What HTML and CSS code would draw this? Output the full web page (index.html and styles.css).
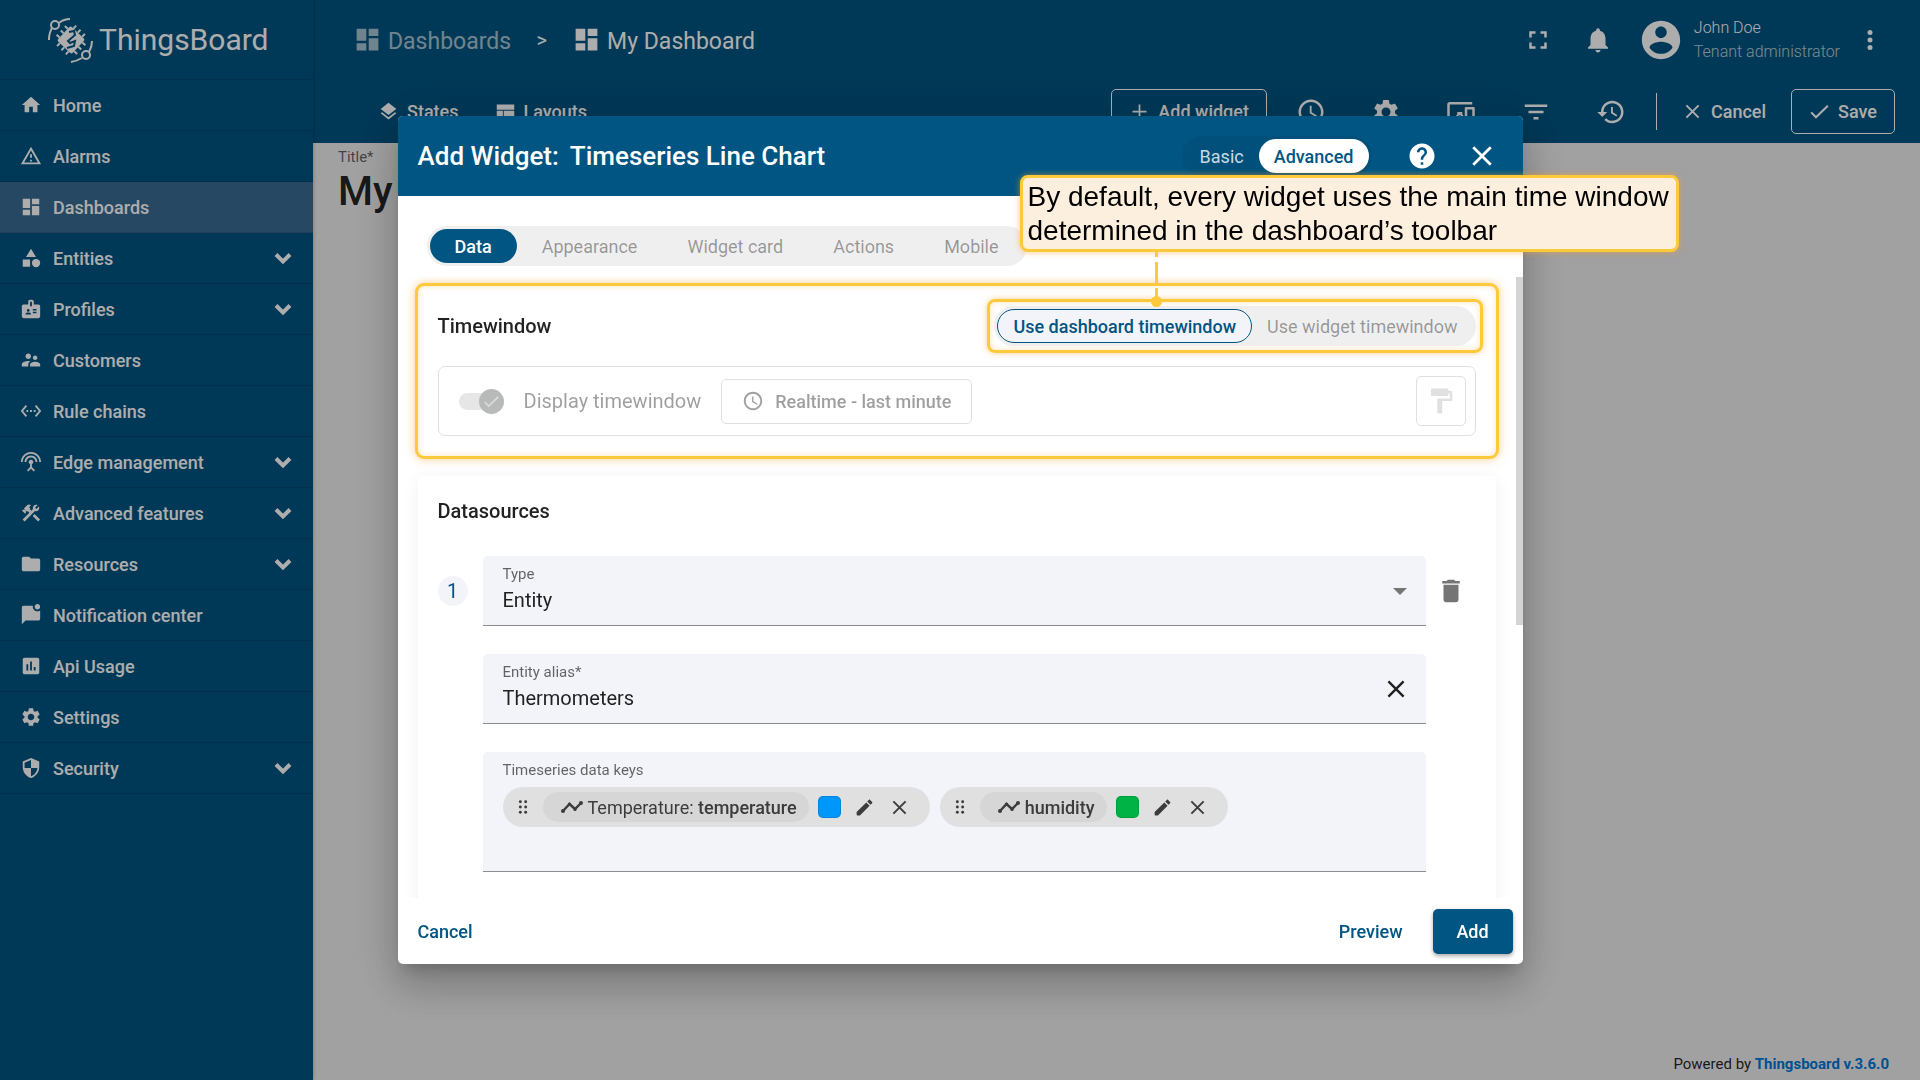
FILE: index.html
```html
<!DOCTYPE html>
<html lang="en">
<head>
    <meta charset="UTF-8">
    <meta name="viewport" content="width=device-width, initial-scale=1.0">
    <title>ThingsBoard | My Dashboard</title>
    <link rel="stylesheet" href="styles.css">
</head>

<body>
    <!-- icon sprite -->
    <svg class="sprite" aria-hidden="true">
        <symbol id="i-dashboard" viewBox="0 0 24 24"><path d="M3 13h8V3H3v10zm0 8h8v-6H3v6zm10 0h8V11h-8v10zm0-18v6h8V3h-8z"/></symbol>
        <symbol id="i-home" viewBox="0 0 24 24"><path d="M10 20v-6h4v6h5v-8h3L12 3 2 12h3v8z"/></symbol>
        <symbol id="i-alarm" viewBox="0 0 24 24"><path fill-rule="evenodd" d="M12 2L1 21h22L12 2zm0 4l7.53 13H4.47L12 6zm-1 4v4h2v-4h-2zm0 6v2h2v-2h-2z"/></symbol>
        <symbol id="i-category" viewBox="0 0 24 24"><path d="M12 2l-5.500 9h11zM3 13.500h8v8H3z"/><circle cx="17.500" cy="17.500" r="4.500"/></symbol>
        <symbol id="i-badge" viewBox="0 0 24 24"><path fill-rule="evenodd" d="M20 7h-5V4c0-1.100-.9-2-2-2h-2c-1.100 0-2 .9-2 2v3H4c-1.100 0-2 .9-2 2v11c0 1.100.9 2 2 2h16c1.100 0 2-.9 2-2V9c0-1.100-.9-2-2-2zM9 12c.83 0 1.500.67 1.500 1.500S9.830 15 9 15s-1.500-.67-1.500-1.500S8.170 12 9 12zm3 6H6v-.75c0-1 2-1.500 3-1.500s3 .5 3 1.500V18zm1-9h-2V4h2v5zm5 7.500h-4V15h4v1.500zm0-3h-4V12h4v1.500z"/></symbol>
        <symbol id="i-people" viewBox="0 0 24 24"><path d="M16.5 12c1.38 0 2.49-1.12 2.49-2.5S17.88 7 16.5 7C15.12 7 14 8.12 14 9.5s1.12 2.5 2.5 2.5zM9 11c1.66 0 2.99-1.34 2.99-3S10.66 5 9 5C7.34 5 6 6.34 6 8s1.34 3 3 3zm7.5 3c-1.83 0-5.5.92-5.5 2.75V19h11v-2.25c0-1.83-3.67-2.75-5.5-2.75zM9 13c-2.33 0-7 1.17-7 3.5V19h7v-2.25c0-.85.33-2.34 2.37-3.47C10.5 13.1 9.66 13 9 13z"/></symbol>
        <symbol id="i-rules" viewBox="0 0 24 24"><path d="M7.77 6.76L6.23 5.48.82 12l5.41 6.52 1.54-1.28L3.42 12l4.35-5.24zM7 13h2v-2H7v2zm10-2h-2v2h2v-2zm-6 2h2v-2h-2v2zm6.77-7.52l-1.54 1.28L20.58 12l-4.35 5.24 1.54 1.28L23.18 12l-5.41-6.52z"/></symbol>
        <symbol id="i-edge" viewBox="0 0 24 24"><path d="M12 5c-3.87 0-7 3.13-7 7h2c0-2.76 2.24-5 5-5s5 2.24 5 5h2c0-3.87-3.13-7-7-7zm1 9.29c.88-.39 1.5-1.26 1.5-2.29 0-1.38-1.12-2.5-2.5-2.5S9.5 10.62 9.5 12c0 1.02.62 1.9 1.5 2.29v3.3L7.59 21 9 22.41l3-3 3 3L16.41 21 13 17.59v-3.3zM12 1C5.93 1 1 5.93 1 12h2c0-4.97 4.03-9 9-9s9 4.03 9 9h2c0-6.07-4.93-11-11-11z"/></symbol>
        <symbol id="i-tools" viewBox="0 0 24 24"><path d="M13.78 15.3l6 6 2.11-2.16-6-6-2.11 2.16zM17.5 10c1.93 0 3.5-1.57 3.5-3.5 0-.58-.16-1.12-.41-1.6l-2.7 2.7-1.49-1.49 2.7-2.7c-.48-.25-1.02-.41-1.6-.41C15.57 3 14 4.57 14 6.5c0 .41.08.8.21 1.16l-1.85 1.85-1.78-1.78.71-.71-1.41-1.41L12 3.49c-1.17-1.17-3.07-1.17-4.24 0L4.22 7.03l1.41 1.41H2.81l-.71.71 3.54 3.54.71-.71V9.15l1.41 1.41.71-.71 1.78 1.78-7.41 7.41 2.12 2.12L16.34 9.79c.36.13.75.21 1.16.21z"/></symbol>
        <symbol id="i-folder" viewBox="0 0 24 24"><path d="M10 4H4c-1.1 0-1.99.9-1.99 2L2 18c0 1.1.9 2 2 2h16c1.1 0 2-.9 2-2V8c0-1.1-.9-2-2-2h-8l-2-2z"/></symbol>
        <symbol id="i-chat" viewBox="0 0 24 24"><path d="M22 6.98V16c0 1.1-.9 2-2 2H6l-4 4V4c0-1.1.9-2 2-2h10.1c-.06.32-.1.66-.1 1 0 2.76 2.24 5 5 5 1.13 0 2.16-.39 3-1.02zM16 3c0 1.66 1.34 3 3 3s3-1.34 3-3-1.34-3-3-3-3 1.34-3 3z"/></symbol>
        <symbol id="i-chart" viewBox="0 0 24 24"><path fill-rule="evenodd" d="M19 3H5c-1.1 0-2 .9-2 2v14c0 1.1.9 2 2 2h14c1.1 0 2-.9 2-2V5c0-1.1-.9-2-2-2zM9 17H7v-7h2v7zm4 0h-2V7h2v10zm4 0h-2v-4h2v4z"/></symbol>
        <symbol id="i-gear" viewBox="0 0 24 24"><path d="M19.14 12.94c.04-.3.06-.61.06-.94 0-.32-.02-.64-.07-.94l2.03-1.58c.18-.14.23-.41.12-.61l-1.92-3.32c-.12-.22-.37-.29-.59-.22l-2.39.96c-.5-.38-1.03-.7-1.62-.94l-.36-2.54c-.04-.24-.24-.41-.48-.41h-3.84c-.24 0-.43.17-.47.41l-.36 2.54c-.59.24-1.13.57-1.62.94l-2.39-.96c-.22-.08-.47 0-.59.22L2.74 8.87c-.12.21-.08.47.12.61l2.03 1.58c-.05.3-.09.63-.09.94s.02.64.07.94l-2.03 1.58c-.18.14-.23.41-.12.61l1.92 3.32c.12.22.37.29.59.22l2.39-.96c.5.38 1.03.7 1.62.94l.36 2.54c.05.24.24.41.48.41h3.84c.24 0 .44-.17.47-.41l.36-2.54c.59-.24 1.13-.56 1.62-.94l2.39.96c.22.08.47 0 .59-.22l1.92-3.32c.12-.22.07-.47-.12-.61l-2.01-1.58zM12 15.6c-1.98 0-3.6-1.62-3.6-3.6s1.62-3.6 3.6-3.6 3.6 1.62 3.6 3.6-1.62 3.6-3.6 3.6z"/></symbol>
        <symbol id="i-shield" viewBox="0 0 24 24"><path d="M12 1L3 5v6c0 5.55 3.84 10.74 9 12 5.16-1.26 9-6.45 9-12V5l-9-4zm0 10.99h7c-.53 4.12-3.28 7.79-7 8.94V12H5V6.3l7-3.11v8.8z"/></symbol>
        <symbol id="i-chevron" viewBox="0 0 24 24"><path d="M5 8.500l7 7 7-7" fill="none" stroke="currentColor" stroke-width="4"/></symbol>
        <symbol id="i-layers" viewBox="0 0 24 24"><path d="M11.99 18.54l-7.37-5.73L3 14.07l9 7 9-7-1.63-1.27-7.38 5.74zM12 16l7.36-5.73L21 9l-9-7-9 7 1.63 1.27L12 16z"/></symbol>
        <symbol id="i-layout" viewBox="0 0 24 24"><path d="M2 4h20v6H2zM2 11h7v9H2zM10 11h12v9H10z"/></symbol>
        <symbol id="i-clock" viewBox="0 0 24 24"><path d="M11.99 2C6.47 2 2 6.48 2 12s4.47 10 9.99 10C17.52 22 22 17.52 22 12S17.52 2 11.99 2zM12 20c-4.42 0-8-3.58-8-8s3.58-8 8-8 8 3.58 8 8-3.58 8-8 8zm.5-13H11v6l5.25 3.15.75-1.23-4.500-2.670z"/></symbol>
        <symbol id="i-devices" viewBox="0 0 24 24"><path fill-rule="evenodd" d="M3 6h18V4H3c-1.1 0-2 .9-2 2v12c0 1.1.9 2 2 2h4v-2H3V6zm10 6H9v1.78c-.61.55-1 1.33-1 2.22s.39 1.67 1 2.22V20h4v-1.78c.61-.55 1-1.34 1-2.22s-.39-1.67-1-2.22V12zm-2 5.500c-.83 0-1.500-.67-1.500-1.500s.67-1.500 1.500-1.500 1.500.67 1.500 1.500-.67 1.500-1.500 1.500zM22 8h-6c-.5 0-1 .5-1 1v10c0 .5.5 1 1 1h6c.5 0 1-.5 1-1V9c0-.5-.5-1-1-1zm-1 10h-4v-8h4v8z"/></symbol>
        <symbol id="i-filter" viewBox="0 0 24 24"><path d="M10 18h4v-2h-4v2zM3 6v2h18V6H3zm3 7h12v-2H6v2z"/></symbol>
        <symbol id="i-history" viewBox="0 0 24 24"><path d="M13 3c-4.97 0-9 4.03-9 9H1l3.89 3.89.07.14L9 12H6c0-3.87 3.13-7 7-7s7 3.13 7 7-3.13 7-7 7c-1.93 0-3.68-.79-4.94-2.06l-1.42 1.42C8.27 19.99 10.51 21 13 21c4.97 0 9-4.03 9-9s-4.03-9-9-9zm-1 5v5l4.28 2.54.72-1.21-3.5-2.08V8H12z"/></symbol>
        <symbol id="i-fullscreen" viewBox="0 0 24 24"><path d="M7 14H5v5h5v-2H7v-3zm-2-4h2V7h3V5H5v5zm12 7h-3v2h5v-5h-2v3zM14 5v2h3v3h2V5h-5z"/></symbol>
        <symbol id="i-bell" viewBox="0 0 24 24"><path d="M12 22c1.1 0 2-.9 2-2h-4c0 1.1.89 2 2 2zm6-6v-5c0-3.07-1.64-5.64-4.5-6.32V4c0-.83-.67-1.5-1.5-1.5s-1.5.67-1.5 1.5v.68C7.63 5.36 6 7.92 6 11v5l-2 2v1h16v-1l-2-2z"/></symbol>
        <symbol id="i-account" viewBox="0 0 24 24"><path d="M12 2C6.48 2 2 6.48 2 12s4.48 10 10 10 10-4.48 10-10S17.52 2 12 2zm0 3c1.66 0 3 1.34 3 3s-1.34 3-3 3-3-1.34-3-3 1.34-3 3-3zm0 14.2c-2.5 0-4.71-1.28-6-3.22.03-1.99 4-3.08 6-3.08 1.99 0 5.97 1.09 6 3.08-1.29 1.94-3.5 3.22-6 3.22z"/></symbol>
        <symbol id="i-more" viewBox="0 0 24 24"><circle cx="12" cy="6" r="2"/><circle cx="12" cy="12" r="2"/><circle cx="12" cy="18" r="2"/></symbol>
        <symbol id="i-plus" viewBox="0 0 24 24"><path d="M12 4v16M4 12h16" fill="none" stroke="currentColor" stroke-width="2"/></symbol>
        <symbol id="i-close" viewBox="0 0 24 24"><path d="M5 5l14 14M19 5L5 19" fill="none" stroke="currentColor" stroke-width="2.200"/></symbol>
        <symbol id="i-check" viewBox="0 0 24 24"><path d="M2.500 13l5.500 5.500L21.500 5.500" fill="none" stroke="currentColor" stroke-width="2.400"/></symbol>
        <symbol id="i-help" viewBox="0 0 24 24"><path d="M12 2C6.48 2 2 6.48 2 12s4.48 10 10 10 10-4.48 10-10S17.52 2 12 2zm1 17h-2v-2h2v2zm2.07-7.75l-.9.92C13.45 12.9 13 13.5 13 15h-2v-.5c0-1.1.45-2.1 1.17-2.83l1.24-1.26c.37-.36.59-.86.59-1.41 0-1.1-.9-2-2-2s-2 .9-2 2H8c0-2.21 1.79-4 4-4s4 1.79 4 4c0 .88-.36 1.68-.93 2.25z"/></symbol>
        <symbol id="i-paint" viewBox="0 0 24 24"><path d="M18 4V3c0-.55-.45-1-1-1H5c-.55 0-1 .45-1 1v4c0 .55.45 1 1 1h12c.55 0 1-.45 1-1V6h1v4H9v11c0 .55.45 1 1 1h2c.55 0 1-.45 1-1v-9h8V4h-3z"/></symbol>
        <symbol id="i-delete" viewBox="0 0 24 24"><path d="M6 19c0 1.1.9 2 2 2h8c1.1 0 2-.9 2-2V7H6v12zM19 4h-3.500l-1-1h-5l-1 1H5v2h14V4z"/></symbol>
        <symbol id="i-edit" viewBox="0 0 24 24"><path d="M3 17.25V20c0 .6.400 1 1 1h2.750L17.81 9.94l-3.750-3.750L3 17.250zM20.710 7.040c.39-.39.39-1.020 0-1.410l-2.340-2.340c-.39-.39-1.020-.39-1.410 0l-1.830 1.830 3.750 3.750 1.830-1.830z"/></symbol>
        <symbol id="i-timeline" viewBox="0 0 24 24"><path d="M3 16L9.500 9l5.500 5L21 8" fill="none" stroke="currentColor" stroke-width="2.400"/><circle cx="3" cy="16" r="2"/><circle cx="9.500" cy="9" r="1.600"/><circle cx="15" cy="14.500" r="1.600"/><circle cx="21" cy="8" r="2"/></symbol>
        <symbol id="i-drag" viewBox="0 0 24 24"><circle cx="8" cy="4" r="2.200"/><circle cx="8" cy="12" r="2.200"/><circle cx="8" cy="20" r="2.200"/><circle cx="16" cy="4" r="2.200"/><circle cx="16" cy="12" r="2.200"/><circle cx="16" cy="20" r="2.200"/></symbol>
    </svg>

    <div class="app">
        <nav class="sidebar">
            <a class="logo" href="#">
                <svg viewBox="0 0 46 46" aria-hidden="true">
                    <g fill="none" stroke="currentColor" stroke-width="2">
                        <circle cx="7" cy="8" r="4"/>
                        <circle cx="38" cy="38" r="4"/>
                        <path d="M11 6q5-4 11-4M4 11q-3 5-3 12M44 24q0 6-3 11M34 41q-5 3-11 4"/>
                    </g>
                    <g transform="rotate(43 23 23)">
                        <rect x="13" y="13" width="20" height="20" rx="2" fill="currentColor"/>
                        <path d="M17 13V9M23 13V9M29 13V9M17 33v4M23 33v4M29 33v4M13 17H9M13 23H9M13 29H9M33 17h4M33 23h4M33 29h4" stroke="currentColor" stroke-width="2"/>
                    </g>
                    <path d="M21 15l5-1 1 4-7 6 2 2 5-2-1 5-7 2" fill="none" stroke="#005580" stroke-width="2"/>
                </svg>
                <span>ThingsBoard</span>
            </a>
            <ul class="menu">
                <li><a href="#"><svg class="icon"><use href="#i-home"/></svg>Home</a></li>
                <li><a href="#"><svg class="icon"><use href="#i-alarm"/></svg>Alarms</a></li>
                <li><a href="#" class="active"><svg class="icon"><use href="#i-dashboard"/></svg>Dashboards</a></li>
                <li><a href="#"><svg class="icon"><use href="#i-category"/></svg>Entities<svg class="chevron"><use href="#i-chevron"/></svg></a></li>
                <li><a href="#"><svg class="icon"><use href="#i-badge"/></svg>Profiles<svg class="chevron"><use href="#i-chevron"/></svg></a></li>
                <li><a href="#"><svg class="icon"><use href="#i-people"/></svg>Customers</a></li>
                <li><a href="#"><svg class="icon"><use href="#i-rules"/></svg>Rule chains</a></li>
                <li><a href="#"><svg class="icon"><use href="#i-edge"/></svg>Edge management<svg class="chevron"><use href="#i-chevron"/></svg></a></li>
                <li><a href="#"><svg class="icon"><use href="#i-tools"/></svg>Advanced features<svg class="chevron"><use href="#i-chevron"/></svg></a></li>
                <li><a href="#"><svg class="icon"><use href="#i-folder"/></svg>Resources<svg class="chevron"><use href="#i-chevron"/></svg></a></li>
                <li><a href="#"><svg class="icon"><use href="#i-chat"/></svg>Notification center</a></li>
                <li><a href="#"><svg class="icon"><use href="#i-chart"/></svg>Api Usage</a></li>
                <li><a href="#"><svg class="icon"><use href="#i-gear"/></svg>Settings</a></li>
                <li><a href="#"><svg class="icon"><use href="#i-shield"/></svg>Security<svg class="chevron"><use href="#i-chevron"/></svg></a></li>
            </ul>
        </nav>

        <div class="main">
            <header class="topbar">
                <div class="topbar-row">
                    <div class="breadcrumb">
                        <a href="#" class="crumb faded"><svg><use href="#i-dashboard"/></svg>Dashboards</a>
                        <span class="sep">&gt;</span>
                        <a href="#" class="crumb"><svg><use href="#i-dashboard"/></svg>My Dashboard</a>
                    </div>
                    <div class="user-area">
                        <button class="round-btn" aria-label="Fullscreen"><svg><use href="#i-fullscreen"/></svg></button>
                        <button class="round-btn" aria-label="Notifications"><svg><use href="#i-bell"/></svg></button>
                        <svg class="avatar"><use href="#i-account"/></svg>
                        <div class="user">
                            <span>John Doe</span>
                            <span class="role">Tenant administrator</span>
                        </div>
                        <button class="round-btn" aria-label="More"><svg><use href="#i-more"/></svg></button>
                    </div>
                </div>
                <div class="toolbar">
                    <div class="toolbar-left">
                        <button class="text-btn"><svg><use href="#i-layers"/></svg>States</button>
                        <button class="text-btn"><svg><use href="#i-layout"/></svg>Layouts</button>
                    </div>
                    <div class="toolbar-right">
                        <button class="text-btn outlined"><svg><use href="#i-plus"/></svg>Add widget</button>
                        <div class="tools">
                            <button class="tool-btn" aria-label="Timewindow"><svg><use href="#i-clock"/></svg></button>
                            <button class="tool-btn" aria-label="Settings"><svg><use href="#i-gear"/></svg></button>
                            <button class="tool-btn" aria-label="Entity aliases"><svg><use href="#i-devices"/></svg></button>
                            <button class="tool-btn" aria-label="Filters"><svg><use href="#i-filter"/></svg></button>
                            <button class="tool-btn" aria-label="Version control"><svg><use href="#i-history"/></svg></button>
                        </div>
                        <span class="divider"></span>
                        <button class="text-btn cancel"><svg><use href="#i-close"/></svg>Cancel</button>
                        <button class="text-btn outlined"><svg><use href="#i-check"/></svg>Save</button>
                    </div>
                </div>
            </header>

            <main class="canvas">
                <div class="title-field">
                    <label for="dashTitle">Title*</label>
                    <input type="text" id="dashTitle" value="My Dashboard">
                </div>
                <p class="powered">Powered by <a href="#">Thingsboard v.3.6.0</a></p>
            </main>
        </div>
    </div>

    <div class="backdrop">
        <div class="dialog" role="dialog" aria-labelledby="dialogTitle">
            <div class="dialog-header">
                <h2 id="dialogTitle"><span>Add Widget:</span><span>Timeseries Line Chart</span></h2>
                <div class="segment on-primary">
                    <button>Basic</button>
                    <button class="selected">Advanced</button>
                </div>
                <div class="header-actions">
                    <button aria-label="Help"><svg><use href="#i-help"/></svg></button>
                    <button aria-label="Close"><svg><use href="#i-close"/></svg></button>
                </div>
            </div>

            <div class="tabs-row">
                <div class="segment tabs">
                    <button class="selected">Data</button>
                    <button>Appearance</button>
                    <button>Widget card</button>
                    <button>Actions</button>
                    <button>Mobile</button>
                </div>
            </div>

            <div class="dialog-body">
                <div class="dialog-content">
                    <section class="panel highlighted">
                        <div class="panel-head">
                            <h3>Timewindow</h3>
                            <div class="segment outlined-segment">
                                <button class="selected">Use dashboard timewindow</button>
                                <button>Use widget timewindow</button>
                            </div>
                        </div>
                        <div class="timewindow">
                            <span class="toggle">
                                <input type="checkbox" id="displayTw" checked disabled>
                                <svg><use href="#i-check"/></svg>
                            </span>
                            <label for="displayTw">Display timewindow</label>
                            <button class="tw-btn" disabled><svg><use href="#i-clock"/></svg>Realtime - last minute</button>
                            <button class="paint-btn" aria-label="Timewindow style" disabled><svg><use href="#i-paint"/></svg></button>
                        </div>
                    </section>

                    <section class="panel">
                        <h3>Datasources</h3>
                        <div class="datasource">
                            <span class="number">1</span>
                            <div class="fields">
                                <div class="field">
                                    <label for="dsType">Type</label>
                                    <select id="dsType">
                                        <option>Entity</option>
                                    </select>
                                    <svg class="arrow" viewBox="0 0 14 7"><path d="M0 0h14L7 7z"/></svg>
                                </div>
                                <div class="field">
                                    <label for="dsAlias">Entity alias*</label>
                                    <input type="text" id="dsAlias" value="Thermometers">
                                    <button class="clear" aria-label="Clear"><svg><use href="#i-close"/></svg></button>
                                </div>
                                <div class="field keys">
                                    <label for="dsKeys">Timeseries data keys</label>
                                    <div class="chips">
                                        <div class="chip">
                                            <svg class="drag"><use href="#i-drag"/></svg>
                                            <span class="key"><svg><use href="#i-timeline"/></svg><span>Temperature: <b>temperature</b></span></span>
                                            <button class="swatch blue" aria-label="Color"></button>
                                            <button class="chip-btn" aria-label="Edit"><svg><use href="#i-edit"/></svg></button>
                                            <button class="chip-btn" aria-label="Remove"><svg><use href="#i-close"/></svg></button>
                                        </div>
                                        <div class="chip">
                                            <svg class="drag"><use href="#i-drag"/></svg>
                                            <span class="key"><svg><use href="#i-timeline"/></svg><b>humidity</b></span>
                                            <button class="swatch green" aria-label="Color"></button>
                                            <button class="chip-btn" aria-label="Edit"><svg><use href="#i-edit"/></svg></button>
                                            <button class="chip-btn" aria-label="Remove"><svg><use href="#i-close"/></svg></button>
                                        </div>
                                    </div>
                                    <input type="text" id="dsKeys">
                                </div>
                            </div>
                            <button class="delete" aria-label="Remove datasource"><svg><use href="#i-delete"/></svg></button>
                        </div>
                    </section>
                </div>
                <div class="scrollbar"><div class="thumb"></div></div>
            </div>

            <div class="dialog-footer">
                <button class="link-btn">Cancel</button>
                <button class="link-btn preview">Preview</button>
                <button class="add-btn">Add</button>
            </div>

            <!-- hint pointing at the timewindow switch -->
            <div class="callout">By default, every widget uses the main time window<br>determined in the dashboard’s toolbar</div>
        </div>
    </div>
</body>
</html>
```

FILE: styles.css
```css
* {
    box-sizing: border-box;
}

body {
    margin: 0;
    font-family: Roboto, sans-serif;
    font-size: 18px;
    color: rgba(0, 0, 0, 0.87);
}

button,
input,
select {
    font: inherit;
    color: inherit;
    background: none;
    border: none;
    padding: 0;
    margin: 0;
}

button {
    display: inline-flex;
    align-items: center;
    justify-content: center;
    cursor: pointer;
}

a {
    color: inherit;
    text-decoration: none;
}

svg {
    fill: currentColor;
    flex: none;
}

.sprite {
    position: absolute;
    width: 0;
    height: 0;
}

.app {
    display: flex;
    min-height: 100vh;
    background-color: #eee;
}

/* sidebar */

.sidebar {
    flex: none;
    width: 313px;
    background-color: #005380;
    color: white;
    z-index: 1;
    box-shadow: 0 0 4px rgba(0, 0, 0, 0.3);
}

.logo {
    display: flex;
    align-items: center;
    gap: 5px;
    height: 79px;
    padding-left: 48px;
    font-size: 30px;
}

.logo svg {
    width: 46px;
    height: 46px;
}

.menu {
    list-style: none;
    margin: 0;
    padding: 0;
    border-top: 1px solid rgba(0, 0, 0, 0.12);
}

.menu a {
    display: flex;
    align-items: center;
    gap: 11px;
    height: 51px;
    padding: 0 20px;
    border-bottom: 1px solid rgba(0, 0, 0, 0.12);
    font-weight: 500;
}

.menu .active {
    background-color: #3a6a92;
}

.icon {
    width: 22px;
    height: 22px;
}

.chevron {
    width: 24px;
    height: 24px;
    margin-left: auto;
    margin-right: -2px;
}

/* top bar */

.main {
    flex: 1;
    display: flex;
    flex-direction: column;
    min-width: 0;
}

.topbar {
    background-color: #005380;
    color: white;
}

.topbar-row {
    display: flex;
    align-items: center;
    justify-content: space-between;
    height: 80px;
    padding: 0 20px 0 40px;
}

.breadcrumb {
    display: flex;
    align-items: center;
}

.crumb {
    display: flex;
    gap: 6px;
    padding-top: 4px;
    font-size: 23px;
    line-height: 34px;
}

.crumb svg {
    width: 29px;
    height: 29px;
}

.faded {
    opacity: 0.65;
}

.sep {
    width: 61px;
    text-align: center;
    font-size: 20px;
}

.user-area {
    display: flex;
    align-items: center;
}

.round-btn {
    width: 60px;
    height: 60px;
}

.round-btn svg {
    width: 30px;
    height: 30px;
}

.avatar {
    width: 46px;
    height: 46px;
    margin: 0 10px;
}

.user {
    display: flex;
    flex-direction: column;
    font-size: 16px;
    font-weight: 300;
    line-height: 24px;
}

.role {
    opacity: 0.7;
}

.toolbar {
    display: flex;
    align-items: center;
    justify-content: space-between;
    height: 63px;
    padding: 0 25px 0 65px;
}

.toolbar-left,
.toolbar-right,
.tools {
    display: flex;
    align-items: center;
}

.toolbar-left {
    gap: 36px;
}

.text-btn {
    gap: 8px;
    height: 45px;
    font-weight: 500;
}

.text-btn svg {
    width: 21px;
    height: 21px;
}

.outlined {
    padding: 0 17px;
    border: 1px solid white;
    border-radius: 5px;
}

.tools {
    margin: 0 7px;
}

.tool-btn {
    width: 75px;
    height: 60px;
}

.tool-btn svg {
    width: 30px;
    height: 30px;
}

.divider {
    width: 1px;
    height: 37px;
    background-color: white;
}

.cancel {
    padding: 0 25px;
}

/* dashboard page */

.canvas {
    flex: 1;
    display: flex;
    flex-direction: column;
    justify-content: space-between;
}

.title-field {
    display: flex;
    flex-direction: column;
    padding: 5px 25px;
}

.title-field label {
    font-size: 15px;
    line-height: 18px;
    color: rgba(0, 0, 0, 0.6);
}

.title-field input {
    font-size: 40px;
    font-weight: 500;
    line-height: 52px;
}

.powered {
    margin: 0;
    padding: 0 31px 6px;
    text-align: right;
    font-size: 15px;
    line-height: 20px;
}

.powered a {
    color: #0078d7;
    font-weight: 700;
}

/* dialog */

.backdrop {
    position: fixed;
    inset: 0;
    z-index: 2;
    display: flex;
    align-items: center;
    justify-content: center;
    background-color: rgba(0, 0, 0, 0.32);
}

.dialog {
    position: relative;
    display: flex;
    flex-direction: column;
    width: 100%;
    max-width: 1125px;
    max-height: calc(100vh - 232px);
    border-radius: 5px;
    background-color: white;
    box-shadow: 0 11px 15px -7px rgba(0, 0, 0, 0.2), 0 24px 38px 3px rgba(0, 0, 0, 0.14), 0 9px 46px 8px rgba(0, 0, 0, 0.12);
}

.dialog-header {
    flex: none;
    display: flex;
    align-items: center;
    height: 80px;
    padding: 0 11px 0 20px;
    border-radius: 5px 5px 0 0;
    background-color: #005583;
    color: white;
}

.dialog-header h2 {
    flex: 1;
    display: flex;
    gap: 11px;
    margin: 0;
    font-size: 26px;
    font-weight: 500;
}

.header-actions {
    display: flex;
    margin-left: 20px;
}

.header-actions button {
    width: 60px;
    height: 60px;
}

.header-actions svg {
    width: 30px;
    height: 30px;
}

.segment {
    display: inline-flex;
    height: 40px;
    padding: 3px;
    border-radius: 20px;
    background-color: #efefef;
    color: rgba(0, 0, 0, 0.38);
}

.segment button {
    padding: 0 15px;
    border-radius: 18px;
}

.segment .selected {
    font-weight: 500;
}

.on-primary {
    background-color: rgba(0, 0, 0, 0.06);
    color: rgba(255, 255, 255, 0.8);
}

.on-primary .selected {
    background-color: white;
    color: #005583;
}

.tabs-row {
    flex: none;
    padding: 30px 29px 11px;
}

.segment.tabs button {
    padding: 0 25px;
}

.tabs .selected {
    background-color: #005583;
    color: white;
}

.dialog-body {
    flex: 1;
    display: flex;
    min-height: 0;
}

.dialog-content {
    flex: 1;
    display: flex;
    flex-direction: column;
    gap: 20px;
    padding: 9px 20px 20px;
    overflow-y: auto;
    scrollbar-width: none;
}

.scrollbar {
    flex: none;
    width: 7px;
}

.thumb {
    height: 56%;
    background-color: #d4d4d4;
}

.panel {
    flex: none;
    padding: 20px;
    border-radius: 5px;
    background-color: white;
    box-shadow: 0 2px 18px rgba(0, 40, 30, 0.06);
}

.panel h3 {
    margin: 0;
    font-size: 20px;
    font-weight: 500;
    line-height: 30px;
}

.highlighted {
    border-radius: 6px;
    box-shadow: 0 0 0 3px #ffc93c, 0 0 10px 3px rgba(255, 160, 40, 0.5), inset 0 0 6px rgba(255, 160, 40, 0.3);
}

.panel-head {
    display: flex;
    align-items: center;
    justify-content: space-between;
    margin-bottom: 20px;
}

.outlined-segment {
    position: relative;
}

.outlined-segment .selected {
    border: 1px solid #005583;
    background-color: #f3f4f9;
    color: #005583;
}

.outlined-segment::after {
    content: '';
    position: absolute;
    inset: -7px;
    border: 3px solid #ffc93c;
    border-radius: 8px;
    box-shadow: 0 0 6px rgba(255, 160, 40, 0.5), inset 0 0 6px rgba(255, 160, 40, 0.3);
    pointer-events: none;
}

.timewindow {
    display: flex;
    align-items: center;
    height: 70px;
    padding: 0 9px 0 20px;
    border: 1px solid #e0e0e0;
    border-radius: 7px;
}

.timewindow label {
    margin: 0 20px;
    font-size: 20px;
    color: rgba(0, 0, 0, 0.38);
}

.toggle {
    display: grid;
    justify-items: end;
    align-items: center;
    width: 45px;
    color: #dcdcdc;
}

.toggle > * {
    grid-area: 1 / 1;
}

.toggle input {
    appearance: none;
    display: flex;
    align-items: center;
    justify-content: flex-end;
    width: 45px;
    height: 17px;
    border-radius: 9px;
    background-color: #e6e6e6;
}

.toggle input::after {
    content: '';
    width: 25px;
    height: 25px;
    border-radius: 50%;
    background-color: #b8b9b9;
}

.toggle svg {
    width: 17px;
    height: 17px;
    margin-right: 4px;
    z-index: 1;
}

.tw-btn,
.paint-btn {
    border: 1px solid #e0e0e0;
    border-radius: 5px;
}

.tw-btn {
    gap: 11px;
    height: 45px;
    padding: 0 20px;
    font-weight: 500;
    color: rgba(0, 0, 0, 0.38);
}

.tw-btn svg {
    width: 22px;
    height: 22px;
}

.paint-btn {
    width: 50px;
    height: 50px;
    margin-left: auto;
    color: #e0e0e0;
}

.paint-btn svg {
    width: 30px;
    height: 30px;
}

/* datasources */

.datasource {
    display: flex;
    align-items: flex-start;
    gap: 15px;
    padding: 30px 0 40px;
}

.number {
    width: 30px;
    margin-top: 20px;
    border-radius: 50%;
    background-color: #f3f4f9;
    color: #005583;
    font-size: 20px;
    line-height: 30px;
    text-align: center;
}

.fields {
    flex: 1;
    display: flex;
    flex-direction: column;
    gap: 28px;
}

.field {
    position: relative;
    display: flex;
    flex-direction: column;
    min-height: 70px;
    padding: 9px 20px 8px;
    border-bottom: 1px solid #8c8d91;
    border-radius: 5px 5px 0 0;
    background-color: #f3f4f9;
}

.field label {
    font-size: 15px;
    line-height: 18px;
    color: rgba(0, 0, 0, 0.6);
}

.field input,
.field select {
    appearance: none;
    height: 34px;
    font-size: 20px;
}

.arrow {
    position: absolute;
    right: 19px;
    top: 32px;
    width: 14px;
    height: 7px;
    color: #757575;
}

.clear {
    position: absolute;
    right: 17px;
    top: 22px;
}

.clear svg {
    width: 26px;
    height: 26px;
}

.keys {
    min-height: 120px;
}

.chips {
    display: flex;
    gap: 10px;
    padding-top: 8px;
}

.chip {
    display: flex;
    align-items: center;
    height: 40px;
    padding: 0 13px 0 12px;
    border-radius: 20px;
    background-color: #e0e0e0;
    color: #3c3c3c;
}

.chip b {
    font-weight: 500;
}

.drag {
    width: 16px;
    height: 16px;
}

.key {
    display: flex;
    align-items: center;
    gap: 4px;
    height: 30px;
    margin: 0 9px 0 12px;
    padding: 0 12px 0 17px;
    border-radius: 15px;
    background-color: #d6d6d6;
}

.key svg {
    width: 24px;
    height: 24px;
}

.swatch {
    width: 23px;
    height: 22px;
    margin-right: 6px;
    border: 1px solid rgba(0, 0, 0, 0.12);
    border-radius: 5px;
}

.blue {
    background-color: #0097fb;
}

.green {
    background-color: #00b345;
}

.chip-btn {
    width: 35px;
    height: 30px;
}

.chip-btn svg {
    width: 21px;
    height: 21px;
}

.delete {
    width: 50px;
    height: 70px;
    margin: 0 0 0 -15px;
    color: #757575;
}

.delete svg {
    width: 30px;
    height: 30px;
}

.dialog-footer {
    flex: none;
    display: flex;
    align-items: center;
    padding: 11px 10px 10px 20px;
}

.link-btn {
    height: 45px;
    font-weight: 500;
    color: #005583;
}

.preview {
    margin-left: auto;
    padding: 0 30px;
}

.add-btn {
    width: 80px;
    height: 45px;
    border-radius: 5px;
    background-color: #005583;
    color: white;
    font-weight: 500;
    box-shadow: 0 2px 4px rgba(0, 0, 0, 0.35);
}

/* callout */

.callout {
    position: absolute;
    top: 59px;
    left: 622px;
    padding: 2px 7px 1px 5px;
    border: 3px solid #ffc93c;
    border-radius: 8px;
    background-color: #fdefde;
    box-shadow: 0 0 6px rgba(255, 160, 40, 0.6);
    color: black;
    font-family: "Liberation Sans", Arial, sans-serif;
    font-size: 28px;
    line-height: 34px;
    white-space: nowrap;
}

.callout::before {
    content: '';
    position: absolute;
    top: 100%;
    left: 132px;
    width: 3px;
    height: 50px;
    background: repeating-linear-gradient(#ffc93c 0 8px, transparent 8px 13px, #ffc93c 13px 26px);
}

.callout::after {
    content: '';
    position: absolute;
    top: 118px;
    left: 128px;
    width: 11px;
    height: 11px;
    border-radius: 50%;
    background-color: #ffc93c;
}
```
